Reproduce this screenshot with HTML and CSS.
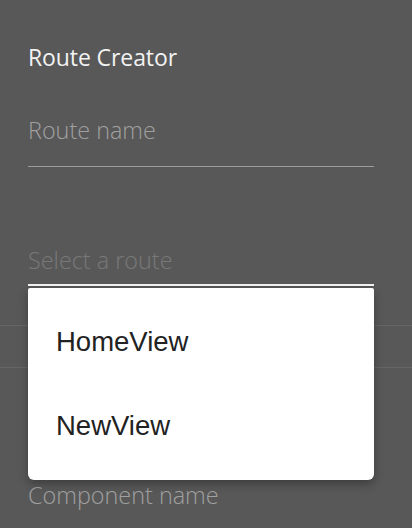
FILE: index.html
```html
<!DOCTYPE html>
<html>
<head>
<meta charset="utf-8">
<link rel="stylesheet" href="styles.css">
</head>
<body>
<div class="page">
  <div class="content">
    <h1 class="title">Route Creator</h1>
    <div class="field field-name"><span class="placeholder">Route name</span></div>
    <div class="field field-select"><span class="placeholder dim">Select a route</span></div>
    <div class="divider-row divider-first"></div>
    <div class="divider-row"></div>
    <div class="field field-component"><span class="placeholder">Component name</span></div>
  </div>
  <div class="menu">
    <div class="menu-item">HomeView</div>
    <div class="menu-item">NewView</div>
  </div>
</div>
</body>
</html>
```
FILE: styles.css
```css
html, body {
  margin: 0;
  padding: 0;
  background: #585858;
  height: 100%;
  overflow: hidden;
}
.page {
  position: relative;
  height: 528px;
  font-family: "Open Sans", "Liberation Sans", sans-serif;
}
.content {
  display: flex;
  flex-direction: column;
}
.title {
  margin: 43px 28px 0;
  font-size: 23px;
  line-height: 28px;
  font-weight: 500;
  color: #f2f2f2;
  letter-spacing: -0.1px;
}
.field {
  margin: 0 38px 0 28px;
  font-size: 23.4px;
  line-height: 28px;
  font-weight: 300;
  white-space: nowrap;
}
.placeholder {
  color: #a0a0a0;
}
.placeholder.dim {
  color: #787878;
}
.field-name {
  margin-top: 45px;
  padding-bottom: 22px;
  border-bottom: 1px solid #9d9d9d;
}
.field-select {
  margin-top: 79px;
  padding-bottom: 10px;
  border-bottom: 2px solid #f4f4f4;
}
.divider-row {
  height: 41px;
  border-bottom: 1px solid #656565;
}
.divider-first {
  height: 39px;
}
.field-component {
  margin-top: 113px;
}
.menu {
  position: absolute;
  top: 288px;
  left: 28px;
  width: 346px;
  box-sizing: border-box;
  padding: 12px 0;
  background: #ffffff;
  border-radius: 2px 2px 6px 6px;
  box-shadow: 0 4px 10px rgba(0,0,0,0.3);
}
.menu-item {
  height: 84px;
  display: flex;
  align-items: center;
  padding-left: 28px;
  font-family: "Liberation Sans", Arial, sans-serif;
  font-size: 27.5px;
  color: #222222;
}
```
